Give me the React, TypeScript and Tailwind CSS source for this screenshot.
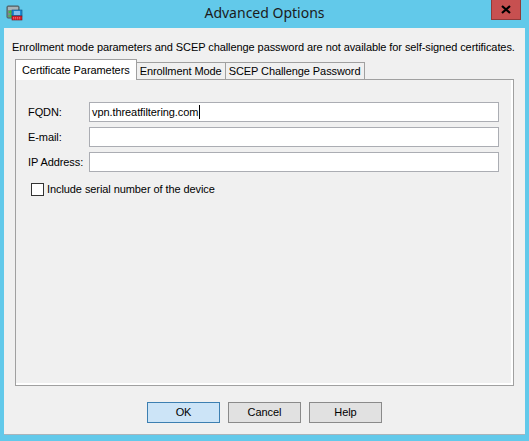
import React from "react";

const AppIcon: React.FC = () => (
  <svg width="17" height="16" viewBox="0 0 17 16">
    <rect x="1" y="1" width="12" height="12" rx="1" fill="#7d8a8f" stroke="#4d585c" />
    <rect x="2" y="2" width="10" height="3" fill="#a9b4b8" />
    <path d="M2 7 L5 5 L5 6.5 L7 6.5 L7 7.5 L5 7.5 L5 9 Z" fill="#3bbf3b" />
    <path d="M7 11 L4 13 L4 11.5 L2 11.5 L2 10.5 L4 10.5 L4 9 Z" fill="#3bbf3b" />
    <rect x="6" y="5" width="10" height="6" fill="#1e8fd6" stroke="#0d4f80" strokeWidth="0.6" />
    <rect x="8" y="6.5" width="6" height="1" fill="#e6f4ff" />
    <rect x="8" y="8.5" width="6" height="1" fill="#e6f4ff" />
    <rect x="6" y="11" width="10" height="4" fill="#d9262f" stroke="#7a1015" strokeWidth="0.6" />
    <path d="M7 12.5 H15 M7 13.8 H15" stroke="#f08a8f" strokeWidth="0.6" strokeDasharray="1 1" />
  </svg>
);

const Field: React.FC<{ label: string; value?: string }> = ({ label, value }) => (
  <div className="flex items-center h-[20px] mb-[5px]">
    <span className="w-[61px] shrink-0">{label}</span>
    <div className="flex-1 h-[20px] bg-white border border-[#abadb3] flex items-center px-[2px]">
      {value && (
        <>
          <span>{value}</span>
          <span className="w-px h-[14px] bg-black ml-px" />
        </>
      )}
    </div>
  </div>
);

const Tab: React.FC<{ label: string; active?: boolean }> = ({ label, active }) =>
  active ? (
    <div className="h-[21px] px-[6px] pt-[2px] bg-white border border-b-0 border-[#a0a0a0] relative z-10 -mb-px">
      {label}
    </div>
  ) : (
    <div className="h-[17px] mt-[4px] px-[3px] bg-[#f0f0f0] border border-l-0 border-b-0 border-[#a0a0a0] leading-[16px]">
      {label}
    </div>
  );

const Button: React.FC<{ label: string; primary?: boolean }> = ({ label, primary }) => (
  <div
    className={
      primary
        ? "w-[73px] h-[21px] flex items-center justify-center bg-[#cce4f7] border border-[#3c7fb1]"
        : "w-[73px] h-[21px] flex items-center justify-center bg-[#e1e1e1] border border-[#8a8a8a]"
    }
  >
    {label}
  </div>
);

export default function App() {
  return (
    <div
      className="w-[529px] h-[441px] bg-[#62c9ea] flex flex-col text-[11px] tracking-[-0.08px] text-black overflow-hidden"
      style={{ fontFamily: '"Liberation Sans", Arial, sans-serif' }}
    >
      {/* title bar */}
      <div className="h-[28px] flex items-start relative">
        <div className="pl-[6px] pt-[5px]">
          <AppIcon />
        </div>
        <div
          className="absolute inset-x-0 top-0 text-center text-[14px] tracking-normal leading-[20px] pt-[3px] text-[#1b1b1b] pointer-events-none"
          style={{ fontFamily: '"Noto Sans", "Open Sans", sans-serif' }}
        >
          Advanced Options
        </div>
        <div className="flex-1" />
        <div className="w-[30px] h-[20px] bg-[#c75050] border border-[#8e3a3a] border-t-0 mr-[8px] flex items-center justify-center">
          <svg width="10" height="9" viewBox="0 0 10 9">
            <path d="M1 1 L9 8 M9 1 L1 8" stroke="#000" strokeWidth="2.2" />
          </svg>
        </div>
      </div>

      {/* client area */}
      <div className="mx-[4px] h-[407px] bg-[#f0f0f0] border-b border-[#a9b4bb] flex flex-col">
        <div className="pl-[8px] pt-[11px] h-[32px]">
          Enrollment mode parameters and SCEP challenge password are not available for self-signed certificates.
        </div>

        <div className="ml-[11px] mr-[11px] flex items-end h-[19px]">
          <Tab label="Certificate Parameters" active />
          <Tab label="Enrollment Mode" />
          <Tab label="SCEP Challenge Password" />
        </div>

        <div className="ml-[11px] mr-[11px] h-[307px] border border-[#a0a0a0] shadow-[inset_-2px_-2px_0_#ffffff] pt-[22px] pl-[12px] pr-[14px]">
          <Field label="FQDN:" value="vpn.threatfiltering.com" />
          <Field label="E-mail:" />
          <Field label="IP Address:" />
          <label className="flex items-center mt-[9px] ml-[3px]">
            <span className="w-[13px] h-[13px] bg-white border border-[#333333] mr-[3px]" />
            <span>Include serial number of the device</span>
          </label>
        </div>

        <div className="flex justify-center gap-[8px] mt-[16px]">
          <Button label="OK" primary />
          <Button label="Cancel" />
          <Button label="Help" />
        </div>
      </div>
    </div>
  );
}
